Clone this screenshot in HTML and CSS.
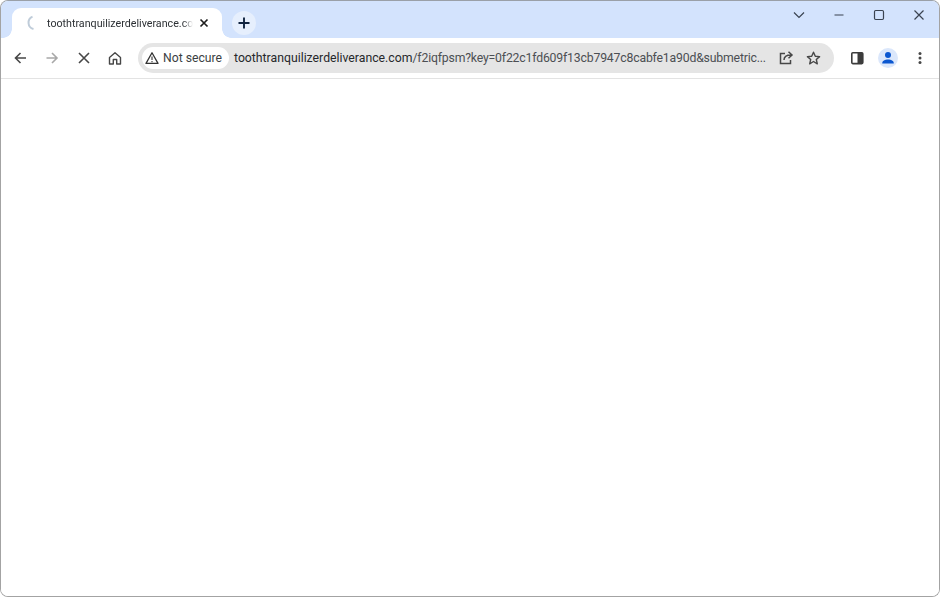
FILE: index.html
```html
<!DOCTYPE html>
<html lang="en">
<head>
<meta charset="utf-8">
<title>Browser window</title>
<link rel="stylesheet" href="styles.css">
</head>
<body>
<div class="window">
  <header class="titlebar">
    <div class="tab">
      <svg class="spinner" width="16" height="16" viewBox="0 0 16 16"><path d="M10.500 1.700A6.500 6.500 0 0 0 11.500 14" fill="none" stroke="#bfccd9" stroke-width="2"/></svg>
      <span class="tab-title">toothtranquilizerdeliverance.com</span>
      <svg class="tab-close" width="10" height="10" viewBox="0 0 10 10"><path d="M1.500 1.500l7 7M8.500 1.500l-7 7" stroke="#1f1f1f" stroke-width="1.700"/></svg>
    </div>
    <div class="new-tab">
      <svg width="14" height="14" viewBox="0 0 14 14"><path d="M7 1.500v11M1.500 7h11" stroke="#10233f" stroke-width="1.900"/></svg>
    </div>
    <div class="captions">
      <svg class="cap" width="40" height="28" viewBox="0 0 40 28"><path d="M15 11.500l5 5 5-5" fill="none" stroke="#3a4350" stroke-width="1.200"/></svg>
      <svg class="cap" width="40" height="28" viewBox="0 0 40 28"><path d="M15.500 14h9" stroke="#3a4350" stroke-width="1.200"/></svg>
      <svg class="cap" width="40" height="28" viewBox="0 0 40 28"><rect x="15.500" y="9.500" width="9" height="9" rx="1.200" fill="none" stroke="#3a4350" stroke-width="1.200"/></svg>
      <svg class="cap" width="40" height="28" viewBox="0 0 40 28"><path d="M15.500 9.500l9 9M24.500 9.500l-9 9" stroke="#3a4350" stroke-width="1.200"/></svg>
    </div>
  </header>
  <nav class="toolbar">
    <div class="nav-buttons">
      <svg width="32" height="24" viewBox="0 0 32 24"><path d="M22 12H12M16.500 7l-5 5 5 5" fill="none" stroke="#474747" stroke-width="1.600"/></svg>
      <svg width="32" height="24" viewBox="0 0 32 24"><path d="M10.500 12h10M16 7l5 5-5 5" fill="none" stroke="#a8a8a8" stroke-width="1.600"/></svg>
      <svg width="32" height="24" viewBox="0 0 32 24"><path d="M11 7l10 10M21 7L11 17" fill="none" stroke="#474747" stroke-width="1.600"/></svg>
      <svg width="32" height="24" viewBox="0 0 32 24"><path d="M9.500 11.500L15 6.800l5.500 4.700V18h-3.800v-4.500h-3.400V18H9.500z" fill="none" stroke="#474747" stroke-width="1.400" stroke-linejoin="round"/></svg>
    </div>
    <div class="omnibox">
      <div class="chip">
        <svg width="14" height="14" viewBox="0 0 14 14"><path d="M7 1.800L13 12.400H1z" fill="none" stroke="#333" stroke-width="1.300" stroke-linejoin="round"/><path d="M7 5.500v3.600M7 10v1.300" stroke="#333" stroke-width="1.100"/></svg>
        <span>Not secure</span>
      </div>
      <span class="url">toothtranquilizerdeliverance.com<span class="url-path">/f2iqfpsm?key=0f22c1fd609f13cb7947c8cabfe1a90d&amp;submetric...</span></span>
      <svg class="omni-icon" width="28" height="24" viewBox="0 0 28 24"><path d="M13 7.500H8.500v10h10V14M12 14c0-3 2.500-5 7-5M16.500 5.800L20 9l-3.500 3.200" fill="none" stroke="#474747" stroke-width="1.500"/></svg>
      <svg class="omni-icon" width="28" height="24" viewBox="0 0 28 24"><path d="M13.500 6.200l1.800 4 4.300.400-3.300 2.900 1 4.300-3.800-2.300-3.800 2.300 1-4.300-3.300-2.900 4.300-.400z" fill="none" stroke="#474747" stroke-width="1.400" stroke-linejoin="round"/></svg>
    </div>
    <div class="tools">
      <svg width="32" height="24" viewBox="0 0 32 24"><rect x="10.800" y="6.800" width="11" height="10.800" rx="1" fill="#fff" stroke="#3c3c3c" stroke-width="1.600"/><rect x="16.500" y="6.800" width="5.300" height="10.800" fill="#3c3c3c"/></svg>
      <div class="avatar">
        <svg width="14" height="14" viewBox="0 0 14 14"><circle cx="7" cy="4" r="3" fill="#0b57d0"/><path d="M1.200 12.500c0-3 2.800-4 5.800-4s5.800 1 5.800 4z" fill="#0b57d0"/></svg>
      </div>
      <svg width="32" height="24" viewBox="0 0 32 24"><circle cx="16" cy="7.500" r="1.500" fill="#474747"/><circle cx="16" cy="12" r="1.500" fill="#474747"/><circle cx="16" cy="16.500" r="1.500" fill="#474747"/></svg>
    </div>
  </nav>
  <main class="content"></main>
</div>
</body>
</html>
```

FILE: styles.css
```css
* { box-sizing: border-box; }
html, body { margin: 0; padding: 0; height: 100%; background: #fff; overflow: hidden; }
body { font-family: Roboto, "Open Sans", sans-serif; }
svg { display: block; flex: none; }

.window {
  width: 940px;
  height: 597px;
  display: flex;
  flex-direction: column;
  overflow: hidden;
  background: #fff;
  border: 1px solid #a3a3a3;
  border-top-color: #9aa0a8;
  border-radius: 8px;
}

.titlebar {
  height: 37px;
  flex: none;
  display: flex;
  align-items: flex-end;
  background: #d3e3fd;
  padding-left: 11px;
}

.tab {
  position: relative;
  width: 210px;
  height: 30px;
  display: flex;
  align-items: center;
  padding-left: 10px;
  background: #fff;
  border-radius: 9px 9px 0 0;
}
.tab::before, .tab::after {
  content: "";
  position: absolute;
  bottom: 0;
  width: 9px;
  height: 9px;
}
.tab::before { left: -9px; background: radial-gradient(circle at 0 0, #d3e3fd 8.500px, #fff 9px); }
.tab::after { right: -9px; background: radial-gradient(circle at 100% 0, #d3e3fd 8.500px, #fff 9px); }

.spinner { margin-right: 9px; }
.tab-title {
  width: 146px;
  font-size: 10.700px;
  line-height: 32px;
  height: 30px;
  color: #2b2f33;
  white-space: nowrap;
  overflow: hidden;
  -webkit-mask-image: linear-gradient(to right, #000 136px, transparent 146px);
  mask-image: linear-gradient(to right, #000 136px, transparent 146px);
}
.tab-close { margin-left: 6px; }

.new-tab {
  width: 24px;
  height: 24px;
  margin: 0 0 3px 10px;
  border-radius: 50%;
  background: #e6effd;
  display: flex;
  align-items: center;
  justify-content: center;
}

.captions {
  display: flex;
  align-self: flex-start;
  margin-left: auto;
}

.toolbar {
  height: 41px;
  flex: none;
  display: flex;
  align-items: center;
  background: #fff;
  border-bottom: 1px solid #e3e3e3;
  padding: 0 3px 1px 3px;
}

.nav-buttons { display: flex; width: 134px; flex: none; }

.omnibox {
  width: 696px;
  height: 30px;
  flex: none;
  display: flex;
  align-items: center;
  padding: 0 7px 0 4px;
  border-radius: 15px;
  background: #e5e5e5;
}
.chip {
  height: 22px;
  width: 87px;
  flex: none;
  display: flex;
  align-items: center;
  gap: 4px;
  padding-left: 3px;
  border-radius: 11px;
  background: #fff;
  font-size: 12.200px;
  color: #3c3f43;
}
.url {
  margin-left: 5px;
  width: 532px;
  flex: none;
  font-size: 12.250px;
  color: #26282b;
  white-space: nowrap;
}
.url-path { color: #4c4f53; letter-spacing: -0.18px; }
.omni-icon:first-of-type { margin-left: 6px; }

.tools { display: flex; align-items: center; margin-left: 7px; }
.avatar {
  width: 20px;
  height: 20px;
  margin: 0 6px 0 5px;
  border-radius: 50%;
  background: #dbe7fb;
  display: flex;
  align-items: center;
  justify-content: center;
}

.content { flex: 1; background: #fff; }
```
